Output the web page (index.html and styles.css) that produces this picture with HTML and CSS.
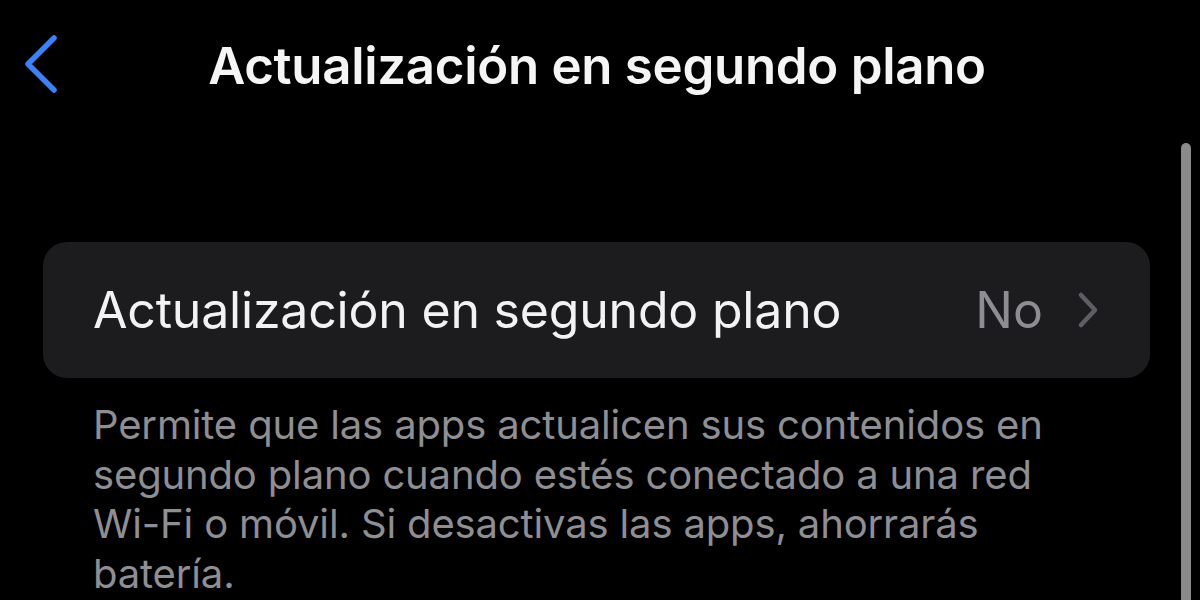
FILE: index.html
```html
<!DOCTYPE html>
<html lang="es">
<head>
<meta charset="utf-8">
<title>Actualización en segundo plano</title>
<link rel="stylesheet" href="styles.css">
</head>
<body>
<div class="screen">
  <header class="navbar">
    <button class="back" aria-label="Atrás">
      <svg viewBox="0 0 36 60" width="36" height="60"><path d="M32 4 L6 30 L32 56" fill="none" stroke="#3a82f7" stroke-width="5.5" stroke-linecap="round" stroke-linejoin="round"/></svg>
    </button>
    <h1 class="title">Actualización en segundo plano</h1>
    <span></span>
  </header>

  <main class="content">
    <section class="group">
      <div class="row">
        <span class="row-label">Actualización en segundo plano</span>
        <span class="row-value">No</span>
        <svg class="row-chevron" viewBox="0 0 24 40" width="24" height="40"><path d="M5 5 L19 20 L5 35" fill="none" stroke="#5e5e63" stroke-width="4.5" stroke-linecap="round" stroke-linejoin="round"/></svg>
      </div>
    </section>
    <p class="footer">Permite que las apps actualicen sus contenidos en segundo plano cuando estés conectado a una red Wi-Fi o móvil. Si desactivas las apps, ahorrarás batería.</p>
  </main>

  <div class="scrollbar"></div>
</div>
</body>
</html>
```

FILE: styles.css
```css
* { box-sizing: border-box; }

html, body {
  margin: 0;
  padding: 0;
  background: #000;
}

body {
  font-family: Inter, "Open Sans", "Liberation Sans", sans-serif;
  color: #fff;
  overflow: hidden;
}

.screen {
  position: relative;
  width: 1200px;
  height: 600px;
  overflow: hidden;
}

.navbar {
  display: grid;
  grid-template-columns: 1fr auto 1fr;
  align-items: center;
  height: 136px;
  padding: 0 28px 0 22px;
}

.back {
  justify-self: start;
  background: none;
  border: 0;
  padding: 0;
  display: flex;
  align-items: center;
  margin-top: -8px;
}

.title {
  margin: -6px 0 0;
  font-size: 51px;
  font-weight: 600;
  letter-spacing: -0.3px;
  color: #f5f5f5;
}

.content {
  padding: 106px 50px 0 43px;
}

.group {
  background: #1c1c1e;
  border-radius: 24px;
}

.row {
  display: flex;
  align-items: center;
  height: 136px;
  padding: 0 50px 0 50px;
}

.row-label {
  flex: 1;
  font-size: 50px;
  font-weight: 400;
  color: #f2f2f2;
  letter-spacing: -0.2px;
}

.row-value {
  font-size: 50px;
  color: #8d8d92;
  margin-right: 33px;
}

.row-chevron {
  display: block;
}

.footer {
  margin: 22px 0 0;
  padding: 0 0 0 50px;
  max-width: 1060px;
  font-size: 40px;
  line-height: 49.5px;
  color: #8e8e93;
  letter-spacing: -0.15px;
}

.scrollbar {
  position: absolute;
  left: 1181px;
  top: 143px;
  width: 10px;
  height: 480px;
  border-radius: 5px;
  background: #8a8a8a;
}
```
